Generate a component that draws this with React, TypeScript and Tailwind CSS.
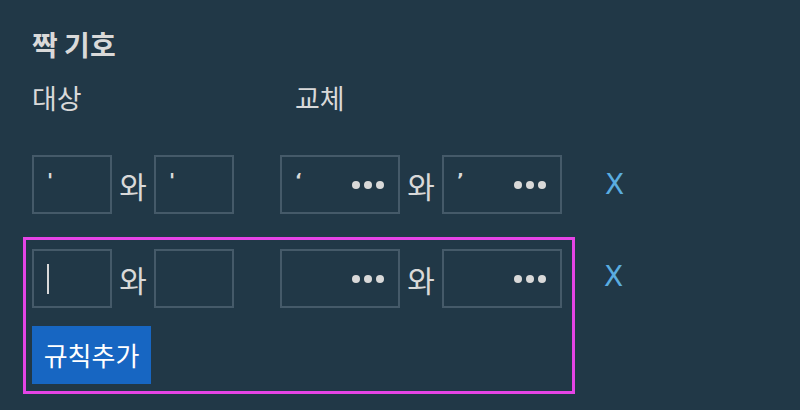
import React from 'react';

const font = { fontFamily: '"Noto Sans CJK KR", "Noto Sans", sans-serif' };

function Dots() {
  return (
    <div className="flex items-center gap-[4px]">
      <span className="w-[8px] h-[8px] rounded-full bg-[#d9d9d9]" />
      <span className="w-[8px] h-[8px] rounded-full bg-[#d9d9d9]" />
      <span className="w-[8px] h-[8px] rounded-full bg-[#d9d9d9]" />
    </div>
  );
}

function SmallBox({ ch, cursor }: { ch?: string; cursor?: boolean }) {
  return (
    <div className="w-[80px] h-[59px] border-2 border-[#455a69] relative">
      {ch && <span className="absolute left-[13px] top-[11px] text-[20px] leading-[24px] font-bold text-[#d9d9d9] font-['DejaVu_Sans']">{ch}</span>}
      {cursor && <span className="absolute left-[13px] top-[13px] w-[2px] h-[30px] bg-[#d9d9d9]" />}
    </div>
  );
}

function WideBox({ ch }: { ch?: string }) {
  return (
    <div className="w-[120px] h-[59px] border-2 border-[#455a69] relative flex items-center justify-end pr-[14px]">
      {ch && <span className="absolute left-[13px] top-[11px] text-[18px] leading-[24px] font-bold text-[#d9d9d9] font-['DejaVu_Sans']">{ch}</span>}
      <Dots />
    </div>
  );
}

function Wa() {
  return <span className="w-[42px] text-center text-[30px] leading-[40px] text-[#d9d9d9]">와</span>;
}

function Row({ a, b, c, d, cursor }: { a?: string; b?: string; c?: string; d?: string; cursor?: boolean }) {
  return (
    <div className="flex items-center">
      <SmallBox ch={a} cursor={cursor} />
      <Wa />
      <SmallBox ch={b} />
      <div className="w-[46px]" />
      <WideBox ch={c} />
      <Wa />
      <WideBox ch={d} />
    </div>
  );
}

export default function App() {
  return (
    <div className="w-[800px] h-[410px] bg-[#213847] pl-8 pt-[24px] overflow-hidden" style={font}>
      <h2 className="text-[28px] leading-[40px] font-bold text-[#d9d9d9]">짝 기호</h2>
      <div className="flex mt-[16px] text-[27px] leading-[36px] text-[#d9d9d9]">
        <span className="w-[263px]">대상</span>
        <span>교체</span>
      </div>

      <div className="flex items-center mt-[39px]">
        <Row a="'" b="'" c="‘" d="’" />
        <span className="ml-[43px] text-[28px] leading-[40px] text-[#5aade0] font-['DejaVu_Sans']">X</span>
      </div>

      <div className="flex items-start mt-[23px] -ml-[9px]">
        <div className="border-[3px] border-[#e544e6] w-[552px] h-[157px] pl-[6px] pt-[9px]">
          <Row cursor />
          <button className="mt-[18px] w-[119px] h-[58px] bg-[#1766c2] text-white text-[26px] leading-[34px]">규칙추가</button>
        </div>
        <span className="ml-[29px] mt-[20px] text-[28px] leading-[40px] text-[#5aade0] font-['DejaVu_Sans']">X</span>
      </div>
    </div>
  );
}
